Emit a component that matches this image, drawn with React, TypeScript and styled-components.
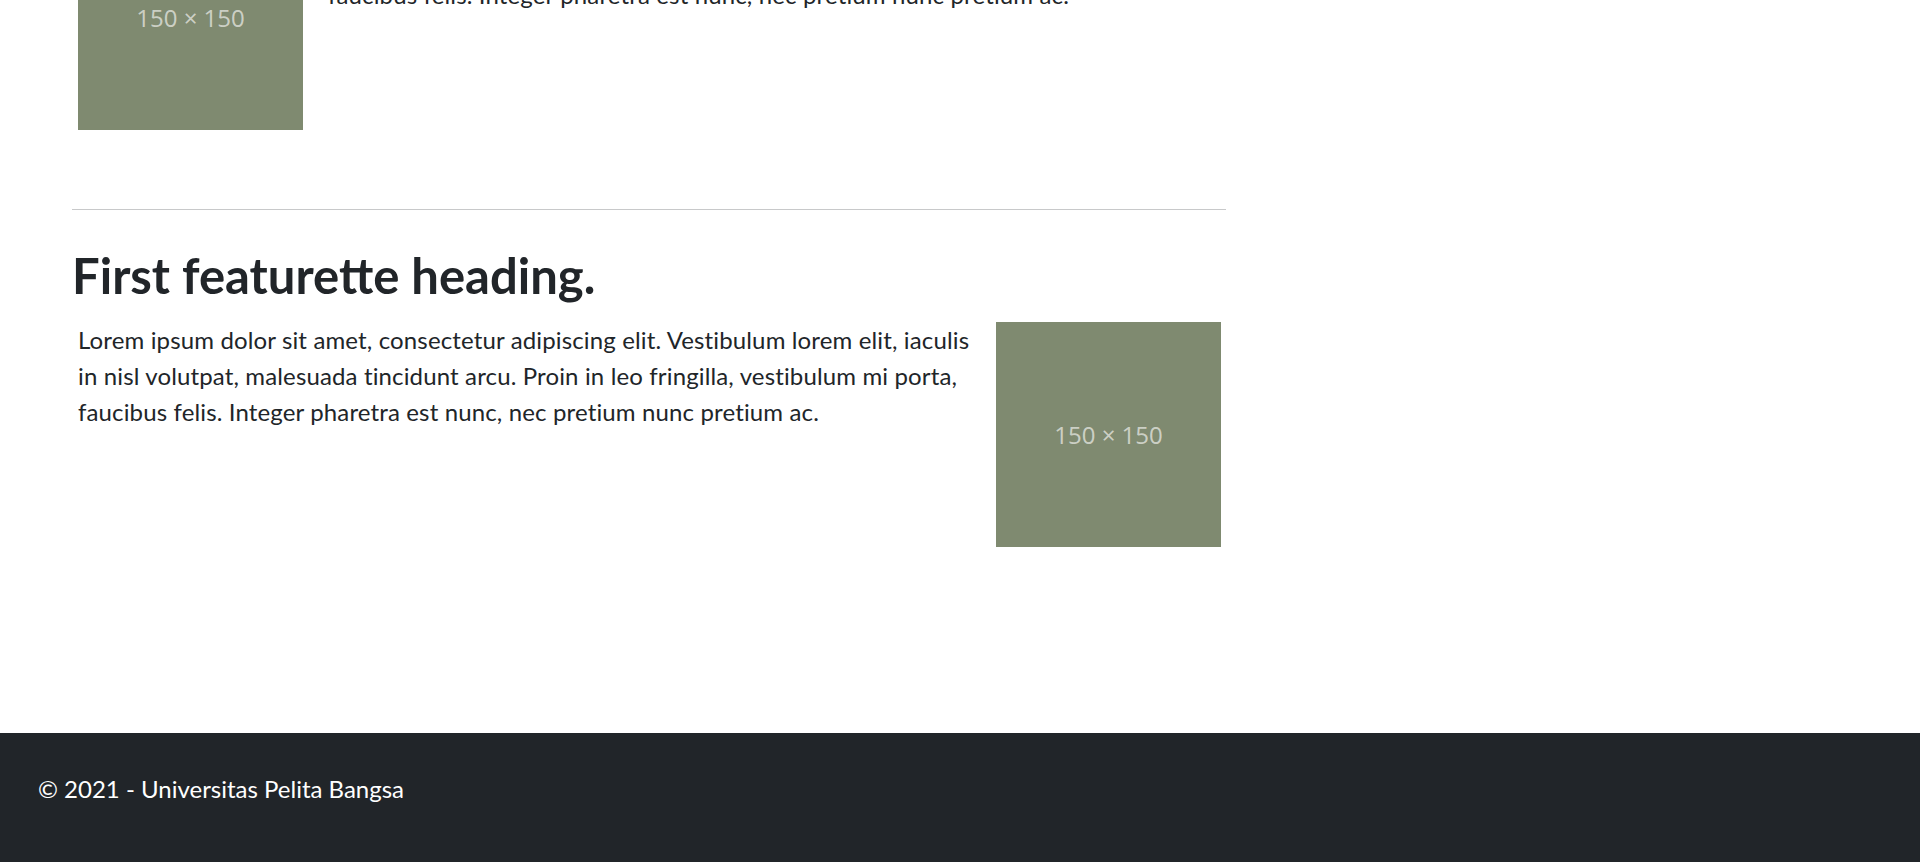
import React, { useLayoutEffect } from "react";
import styled, { createGlobalStyle } from "styled-components";

const GlobalStyle = createGlobalStyle`
  html { scroll-behavior: auto; }
  html::-webkit-scrollbar { width: 25px; background: #f0f0f0; }
  html::-webkit-scrollbar-track { background: #f0f0f0; }
  html::-webkit-scrollbar-thumb {
    background: #c0c0c0;
    border-left: 2px solid #f0f0f0;
    border-right: 2px solid #f0f0f0;
    background-clip: padding-box;
  }
  html::-webkit-scrollbar-button:single-button { height: 20px; background: #f0f0f0; }
  body {
    margin: 0;
    font-family: Lato, "Noto Sans", "Liberation Sans", sans-serif;
    color: #212529;
    background: #ffffff;
  }
  * { box-sizing: border-box; }
`;

const Page = styled.div`
  display: flex;
  flex-direction: column;
  min-height: 100vh;
`;

const NavBar = styled.header`
  height: 70px;
  background: #212529;
  display: flex;
  align-items: center;
  gap: 32px;
  padding: 0 38px;
  color: #ffffff;
  font-size: 24px;
`;

const NavLink = styled.span`
  font-size: 20px;
  color: rgba(255, 255, 255, 0.55);
`;

const Hero = styled.section`
  height: 390px;
  display: flex;
  flex-direction: column;
  justify-content: center;
  padding: 0 78px;
  gap: 20px;
`;

const HeroTitle = styled.h1`
  margin: 0;
  font-size: 56px;
  font-weight: 700;
`;

const HeroText = styled.p`
  margin: 0;
  font-size: 24px;
  line-height: 36px;
  max-width: 900px;
`;

const Main = styled.main`
  width: 1226px;
  padding-left: 72px;
  padding-bottom: 186px;
`;

const Featurette = styled.section`
  display: flex;
  flex-direction: column;
`;

const Heading = styled.h2`
  margin: 0 0 22px;
  font-size: 49px;
  line-height: 1;
  font-weight: 700;
  letter-spacing: 0;
`;

const Row = styled.div<{ $imageFirst?: boolean }>`
  display: flex;
  flex-direction: ${(p) => (p.$imageFirst ? "row-reverse" : "row")};
  justify-content: flex-end;
  align-items: flex-start;
  gap: ${(p) => (p.$imageFirst ? "25px" : "14px")};
  padding: 0 5px 0 6px;
`;

const Text = styled.p`
  flex: 1;
  margin: 0;
  font-size: 24px;
  line-height: 36px;
  letter-spacing: 0.14px;
`;

const Placeholder = styled.div`
  flex: 0 0 225px;
  height: 225px;
  background: #7f8a70;
  color: rgba(255, 255, 255, 0.62);
  display: flex;
  align-items: center;
  justify-content: center;
  font-family: "Open Sans", "Noto Sans", sans-serif;
  font-size: 24px;
  font-weight: 400;
`;

const Divider = styled.hr`
  margin: 79px 0 41px;
  border: 0;
  border-top: 1px solid #c8c9ca;
`;

const Footer = styled.footer`
  background: #212529;
  color: #ffffff;
  padding: 38px 38px 55px;
  font-size: 24px;
  line-height: 36px;
`;

const FooterText = styled.p`
  margin: 0;
`;

const LOREM =
  "Lorem ipsum dolor sit amet, consectetur adipiscing elit. Vestibulum lorem elit, iaculis in nisl volutpat, malesuada tincidunt arcu. Proin in leo fringilla, vestibulum mi porta, faucibus felis. Integer pharetra est nunc, nec pretium nunc pretium ac.";

const items = [
  { heading: "Fourth featurette heading.", imageFirst: true },
  { heading: "Third featurette heading.", imageFirst: false },
  { heading: "Second featurette heading.", imageFirst: true },
  { heading: "First featurette heading.", imageFirst: false },
];

export default function App() {
  useLayoutEffect(() => {
    window.scrollTo(0, document.documentElement.scrollHeight);
  }, []);

  return (
    <>
      <GlobalStyle />
      <Page>
        <NavBar>
          <span>Universitas Pelita Bangsa</span>
          <NavLink>Home</NavLink>
          <NavLink>About</NavLink>
        </NavBar>
        <Hero>
          <HeroTitle>Universitas Pelita Bangsa</HeroTitle>
          <HeroText>{LOREM}</HeroText>
        </Hero>
        <Main>
          {items.map((item, i) => (
            <React.Fragment key={item.heading}>
              {i > 0 && <Divider />}
              <Featurette>
                <Heading>{item.heading}</Heading>
                <Row $imageFirst={item.imageFirst}>
                  <Text>{LOREM}</Text>
                  <Placeholder>150 × 150</Placeholder>
                </Row>
              </Featurette>
            </React.Fragment>
          ))}
        </Main>
        <Footer>
          <FooterText>© 2021 - Universitas Pelita Bangsa</FooterText>
        </Footer>
      </Page>
    </>
  );
}
